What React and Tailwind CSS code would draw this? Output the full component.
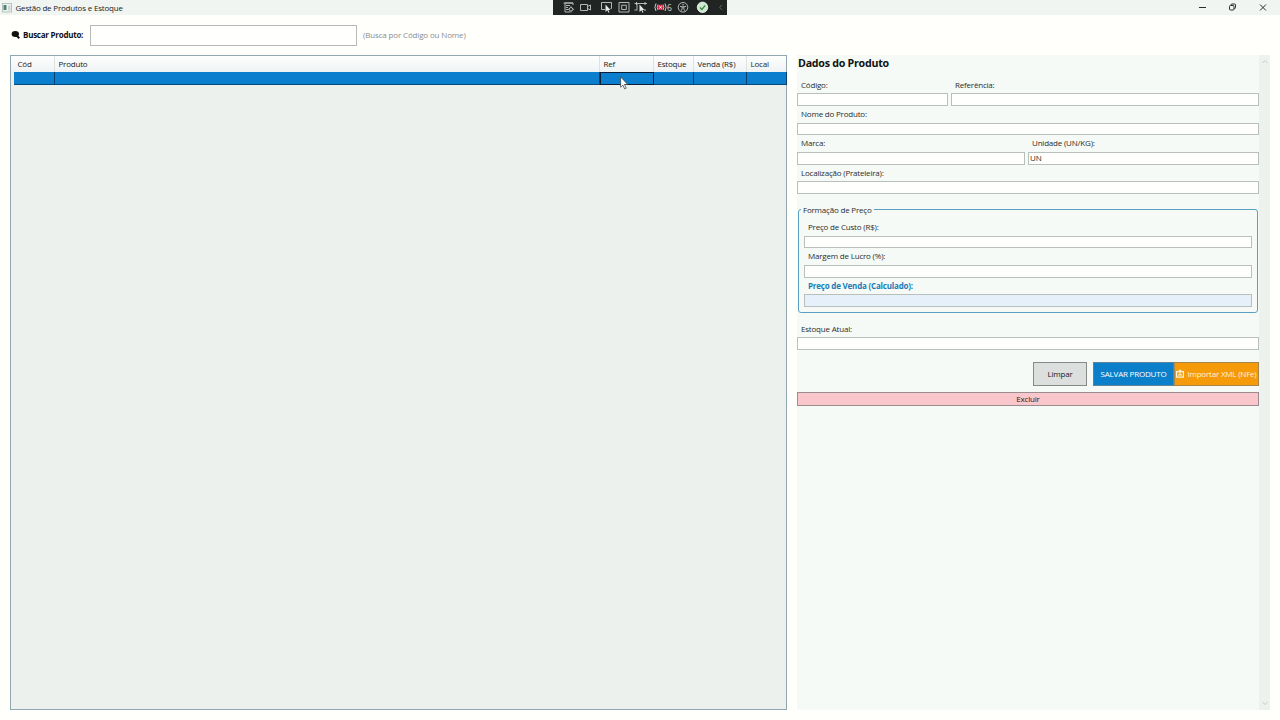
import React, { useState } from "react";

const columns = [
  { label: "Cód", width: "w-[41px]" },
  { label: "Produto", width: "w-[545px]" },
  { label: "Ref", width: "w-[54px]" },
  { label: "Estoque", width: "w-[40px]" },
  { label: "Venda (R$)", width: "w-[53px]" },
  { label: "Local", width: "w-[40px]" },
];

const Field = ({ label, name, value, onChange, className = "", labelClass = "text-[#2c2c2c]", inputClass = "bg-[#fffffd]" }) => (
  <div className={`h-[29.33px] ${className}`}>
    <label className={`block h-[16.66px] pl-[4px] pt-[2px] leading-[12px] whitespace-nowrap ${labelClass}`}>{label}</label>
    <input
      type="text"
      name={name}
      value={value}
      onChange={onChange}
      className={`block h-[12.67px] w-full border border-[#b9bfbc] px-[1px] pb-[1px] leading-[10px] text-[#2c2c2c] outline-none ${inputClass}`}
    />
  </div>
);

const DebugToolbar = () => (
  <div className="absolute left-[553px] top-0 h-[15px] w-[174px] bg-[#202423]">
    <svg width="174" height="15" viewBox="0 0 174 15" fill="none" stroke="#c4c8c6" strokeWidth="0.9">
      <path d="M17 12h-5V3h8v2M10.500 3H20M13 5.500h4M13 7.500h2M13 9.500h2" />
      <circle cx="18" cy="9.3" r="1.800" />
      <path d="M18 6.300v1M18 11.300v1.200M15.200 9.300h1M20 9.300h1" />
      <path d="M27.500 4.500h7v6h-7zM34.500 6.500l3-1.500v5l-3-1.500" />
      <path d="M52 9.500h-3.500v-7h10v6h-1" />
      <path d="M52.500 4.500v7.500l1.800-1.800 1.200 2.500 1-.5-1.200-2.300h2.200z" fill="#e6e9e8" stroke="none" />
      <path d="M66 2.500h10v9.500H66zM68.700 5.200h4.600v4.300h-4.600z" />
      <path d="M84 3.500h8M84 3.500v6M81.500 3.500h2M92 3.500h2M81.500 10h3M91 10h2M83.500 2v3M92 2v3" />
      <path d="M86.500 4.500v7.500l1.800-1.800 1.200 2.500 1-.5-1.200-2.300h2.200z" fill="#e6e9e8" stroke="none" />
      <path d="M103 3.500q-2.200 3.700 0 7.500M105 4.500q-1.600 2.700 0 5.500M112 3.500q2.200 3.700 0 7.500M110 4.500q1.600 2.700 0 5.500" stroke="#e9d9db" />
      <circle cx="107.500" cy="7.300" r="2.800" fill="#d6304c" stroke="none" />
      <path d="M106.200 6l2.600 2.600M108.800 6l-2.600 2.600" stroke="#fff" />
      <circle cx="130" cy="7.300" r="4.800" />
      <circle cx="130" cy="4.700" r="0.700" fill="#d4d8d6" stroke="none" />
      <path d="M127 6.300l2 .5h2l2-.5M129.200 6.800v2l-1 2M130.800 6.800v2l1 2" />
      <circle cx="149.500" cy="7.300" r="5.200" fill="#cfe8cf" stroke="#f0f5f0" />
      <path d="M147 7.400l1.900 2 3.300-4" stroke="#3b8a45" strokeWidth="1.400" />
      <path d="M169 4.800l-2.300 2.500 2.300 2.500" stroke="#68706c" />
    </svg>
    <span className="absolute left-[114px] top-[2px] text-[8.5px] leading-[11px] text-[#d4d8d6]">6</span>
  </div>
);

const TitleBar = () => (
  <div className="flex h-[15px] items-center bg-[#f0f5f2] pl-[2px] pr-[12px]">
    <svg width="10" height="10" viewBox="0 0 10 10">
      <rect x="0.500" y="0.500" width="9" height="8.500" fill="#eef2f1" stroke="#b9c1bf" />
      <rect x="1.500" y="2" width="3" height="5" fill="#4d8279" />
      <rect x="6" y="2.500" width="2.500" height="5" fill="#ccd5d3" />
    </svg>
    <span className="ml-[3.500px] h-[15px] text-[8px] leading-[15px] text-[#222]">Gestão de Produtos e Estoque</span>
    <svg className="ml-auto" width="70" height="13" viewBox="0 0 70 13" fill="none" stroke="#2b2d2c" strokeWidth="1">
      <path d="M1 6.500h7" />
      <rect x="31.500" y="4.500" width="4.500" height="4.500" rx="1" />
      <path d="M33 4.500V4q0-1 1-1h2.500q1 0 1 1v2.500q0 1-1 1H36" />
      <path d="M62 3.500l6 6M68 3.500l-6 6" />
    </svg>
  </div>
);

const ProductTable = () => (
  <div className="h-[655px] w-[777px] border border-[#91a7b0] bg-[#edf1ee]">
    <div className="flex h-[16px] bg-linear-to-b from-[#fefefe] to-[#eff3f4] pl-[3px]">
      {columns.map((col) => (
        <div
          key={col.label}
          className={`${col.width} shrink-0 overflow-hidden border-r border-[#dde2e3] pl-[3.500px] text-[8px] leading-[15px] whitespace-nowrap text-[#222] last:border-r-0`}
        >
          {col.label}
        </div>
      ))}
    </div>
    <div className="flex h-[13px] pl-[3px]">
      {columns.map((col) => (
        <div
          key={col.label}
          className={`${col.width} shrink-0 bg-[#0b7fce] ${
            col.label === "Ref"
              ? "border border-[#0b2036]"
              : "border-r border-b border-r-[#083e70] border-b-[#084a7c]"
          }`}
        />
      ))}
    </div>
  </div>
);

const App = () => {
  const [search, setSearch] = useState("");
  const [formData, setFormData] = useState({
    codigo: "",
    referencia: "",
    nome: "",
    marca: "",
    unidade: "UN",
    localizacao: "",
    custo: "",
    margem: "",
    venda: "",
    estoque: "",
  });

  const handleChange = (e) => {
    const { name, value } = e.target;
    setFormData((prev) => ({ ...prev, [name]: value }));
  };

  const bind = (name) => ({ name, value: formData[name], onChange: handleChange });

  return (
    <div className="relative h-[720px] w-[1280px] overflow-hidden bg-[#fffffc] font-['Open_Sans','Noto_Sans',sans-serif] text-[8px] tracking-[-0.2px]">
      <TitleBar />
      <DebugToolbar />

      <div className="flex h-[40px] items-center pl-[11px]">
        <svg width="10" height="10" viewBox="0 0 10 10">
          <ellipse cx="4.300" cy="4" rx="3.700" ry="3" fill="#111" />
          <path d="M5.500 5.500L8.300 8.300" stroke="#111" strokeWidth="2" />
        </svg>
        <span className="ml-[2px] w-[67px] font-bold tracking-[-0.25px] whitespace-nowrap text-[#111]">Buscar Produto:</span>
        <input
          type="text"
          value={search}
          onChange={(e) => setSearch(e.target.value)}
          className="h-[21px] w-[267px] border border-[#b5b9b7] bg-[#fffffd] px-1 outline-none"
        />
        <span className="ml-[6px] tracking-[-0.15px] text-[#8b8d8c]">(Busca por Código ou Nome)</span>
      </div>

      <div className="flex gap-[10px] pl-[10px]">
        <ProductTable />

        <div className="flex h-[655px] w-[473px] bg-[#f5faf6]">
          <div className="w-[462px]">
            <h2 className="h-[21.67px] pl-[1px] pt-[1px] text-[10.67px] leading-[14px] font-bold tracking-[-0.25px] text-[#111]">Dados do Produto</h2>
            <div className="flex gap-[3px]">
              <Field label="Código:" {...bind("codigo")} className="w-[151px]" />
              <Field label="Referência:" {...bind("referencia")} className="w-[308px]" />
            </div>
            <Field label="Nome do Produto:" {...bind("nome")} />
            <div className="flex gap-[3px]">
              <Field label="Marca:" {...bind("marca")} className="w-[228px]" />
              <Field label="Unidade (UN/KG):" {...bind("unidade")} className="w-[231px]" />
            </div>
            <Field label="Localização (Prateleira):" {...bind("localizacao")} />

            <fieldset className="mx-[1px] mt-[10px] h-[109px] rounded-[3px] border border-[#5c9fc4] px-[5px]">
              <legend className="-ml-[3px] h-[12px] px-[2px] leading-[12px] text-[#2c2c2c]">Formação de Preço</legend>
              <div className="pt-[3px]">
                <Field label="Preço de Custo (R$):" {...bind("custo")} />
                <Field label="Margem de Lucro (%):" {...bind("margem")} />
                <Field
                  label="Preço de Venda (Calculado):"
                  {...bind("venda")}
                  labelClass="font-bold text-[#1b7cb8]"
                  inputClass="bg-[#e5f0fa]"
                />
              </div>
            </fieldset>

            <Field label="Estoque Atual:" {...bind("estoque")} className="mt-[7.67px]" />

            <div className="mt-[12px] flex h-[24px] justify-end">
              <button className="mr-[6px] w-[54px] border border-[#858987] bg-[#dcdfdd] text-[#222]">Limpar</button>
              <button className="w-[81px] border border-[#5e8396] bg-[#0c7fca] whitespace-nowrap text-white">SALVAR PRODUTO</button>
              <button className="flex w-[85px] items-center justify-center gap-[3px] border border-[#a88548] bg-[#f59a09] whitespace-nowrap text-[#fff3db]">
                <svg className="shrink-0" width="8" height="9" viewBox="0 0 8 9" fill="none" stroke="#fff3db" strokeWidth="1.200">
                  <path d="M2.500 2.600H.6v5.500h6.800V2.600H5.500M4 6V1.500M2.300 3L4 1.200 5.700 3M2 6h4" />
                </svg>
                Importar XML (NFe)
              </button>
            </div>
            <button className="mt-[6px] block h-[14px] w-full border border-[#9b8d8f] bg-[#f9c6cc] leading-[12px] text-[#2c2024]">Excluir</button>
          </div>

          <div className="flex w-[11px] flex-col items-center justify-between bg-[#edf2ee] py-[4px]">
            <svg width="6" height="5" viewBox="0 0 6 5" fill="none" stroke="#c6cbc8">
              <path d="M.5 4L3 1.500 5.500 4" />
            </svg>
            <svg width="6" height="5" viewBox="0 0 6 5" fill="none" stroke="#c6cbc8">
              <path d="M.5 1L3 3.500 5.500 1" />
            </svg>
          </div>
        </div>
      </div>

      {/* mouse pointer */}
      <svg className="absolute left-[620px] top-[76px]" width="9" height="14" viewBox="0 0 9 14">
        <path d="M.6.8v10.400l2.300-2.100 1.700 3.800 1.600-.7-1.700-3.700h3.200z" fill="#fff" stroke="#333" strokeWidth="0.700" />
      </svg>
    </div>
  );
};

export default App;
